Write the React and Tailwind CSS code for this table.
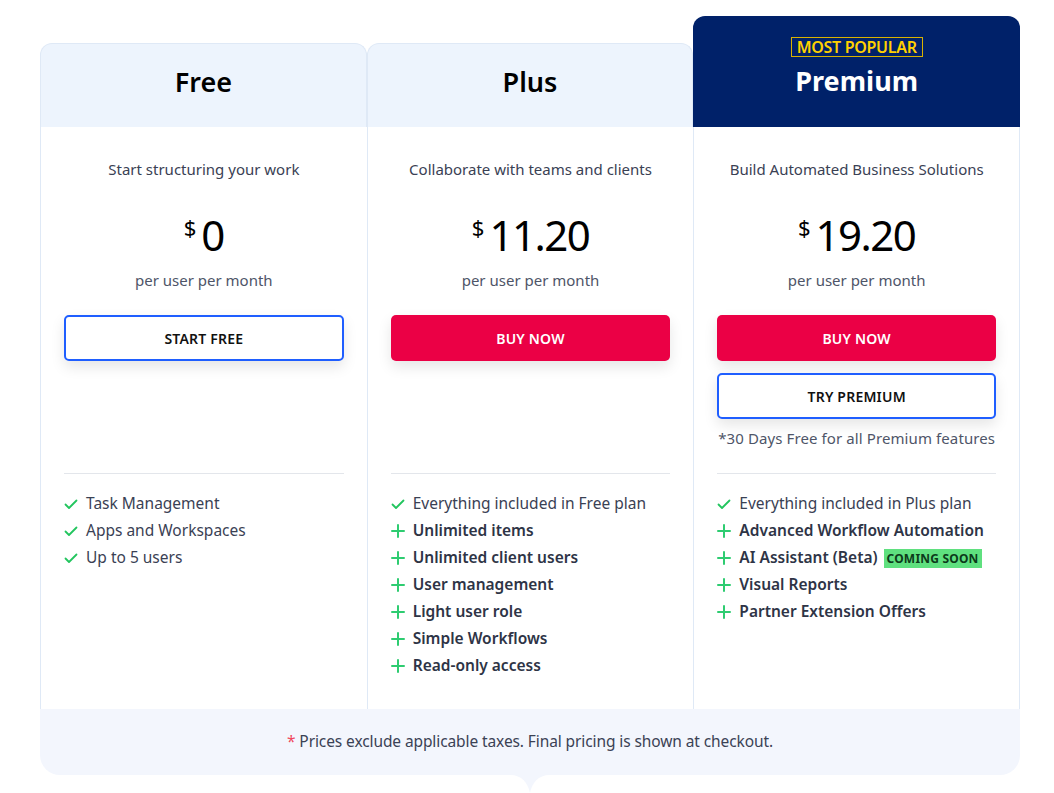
import React from "react";

const Check = () => (
  <svg width="14" height="14" viewBox="0 0 14 14" className="shrink-0">
    <path d="M1.5 7.5 L5 11 L12.5 3.5" fill="none" stroke="#22c55e" strokeWidth="1.8" strokeLinecap="round" strokeLinejoin="round" />
  </svg>
);

const Plus = () => (
  <svg width="14" height="14" viewBox="0 0 14 14" className="shrink-0">
    <path d="M7 1 V13 M1 7 H13" fill="none" stroke="#2ecc71" strokeWidth="2" strokeLinecap="round" />
  </svg>
);

const Feature = ({ icon, children, bold }) => (
  <li className="flex items-center gap-[8px] h-[27px]">
    <span className="w-[14px] flex justify-center">{icon === "check" ? <Check /> : <Plus />}</span>
    <span className={bold ? "font-semibold text-[#2e3446]" : "text-[#3a4154]"}>{children}</span>
  </li>
);

function Column({ title, premium, subtitle, price, buttons, note, features, last }) {
  return (
    <div className={"flex flex-col w-[327px] " + (premium ? "" : "mt-[27px]")}>
      {premium ? (
        <div className="h-[111px] bg-[#002169] rounded-t-[12px] flex flex-col items-center pt-[21px]">
          <span className="border border-[#d8b200] text-[#ffd000] text-[16px] font-semibold leading-[18px] px-[5px] tracking-[-0.3px]">MOST POPULAR</span>
          <span className="text-white text-[27px] font-bold leading-[36px] mt-[6px]">{title}</span>
        </div>
      ) : (
        <div className="h-[84px] bg-[#edf4fd] rounded-t-[12px] border border-b-0 border-[#dfe9f6] flex items-center justify-center pb-[8px]">
          <span className="text-black text-[27px] font-semibold leading-[36px]">{title}</span>
        </div>
      )}
      <div className={"flex-1 bg-white border-l border-[#dfe9f6] px-[23px] " + (last ? "border-r" : "")}>
        <div className="h-[346px] flex flex-col items-center pt-[31px]">
          <p className="text-[15px] leading-[22px] text-[#3a4154]">{subtitle}</p>
          <div className="flex items-start mt-[31px] h-[48px]">
            <span className="text-[22px] leading-[22px] text-black mt-[5px] mr-[5px]">$</span>
            <span className="text-[42px] leading-[48px] text-black tracking-[-1.5px]">{price}</span>
          </div>
          <p className="text-[15px] leading-[22px] text-[#4e5568] mt-[10px]">per user per month</p>
          {buttons.map((b, i) => (
            <div
              key={i}
              className={
                "w-full h-[46px] rounded-[5px] flex items-center justify-center text-[14px] font-semibold tracking-[0.2px] shadow-[0_6px_14px_rgba(0,0,0,0.10)] " +
                (i === 0 ? "mt-[24px] " : "mt-[12px] ") +
                (b.red ? "bg-[#eb0045] text-white" : "bg-white border-2 border-[#1f5eff] text-[#111]")
              }
            >
              {b.label}
            </div>
          ))}
          {note && <p className="text-[15px] leading-[22px] text-[#4e5568] mt-[8px] tracking-[0.1px]">{note}</p>}
        </div>
        <div className="border-t border-[#e3e6eb] pt-[16px] pb-[30px]">
          <ul className="text-[15.5px]">
            {features.map((f, i) => (
              <Feature key={i} icon={f[0]} bold={f[0] === "plus"}>
                {f[1]}
                {f[2] && (
                  <span className="ml-[6px] bg-[#5fe07f] text-[#0c3a1a] text-[12px] font-bold px-[3px] py-[1px] tracking-[0.2px]">{f[2]}</span>
                )}
              </Feature>
            ))}
          </ul>
        </div>
      </div>
    </div>
  );
}

export default function App() {
  return (
    <div className="w-[1054px] h-[793px] bg-white overflow-hidden" style={{ fontFamily: '"Noto Sans", "Open Sans", sans-serif' }}>
      <div className="ml-[40px] w-[980px] pt-[16px]">
        <div className="flex">
          <Column
            title="Free"
            subtitle="Start structuring your work"
            price="0"
            buttons={[{ label: "START FREE" }]}
            features={[
              ["check", "Task Management"],
              ["check", "Apps and Workspaces"],
              ["check", "Up to 5 users"],
            ]}
          />
          <Column
            title="Plus"
            subtitle="Collaborate with teams and clients"
            price="11.20"
            buttons={[{ label: "BUY NOW", red: true }]}
            features={[
              ["check", "Everything included in Free plan"],
              ["plus", "Unlimited items"],
              ["plus", "Unlimited client users"],
              ["plus", "User management"],
              ["plus", "Light user role"],
              ["plus", "Simple Workflows"],
              ["plus", "Read-only access"],
            ]}
          />
          <Column
            title="Premium"
            premium
            last
            subtitle="Build Automated Business Solutions"
            price="19.20"
            buttons={[{ label: "BUY NOW", red: true }, { label: "TRY PREMIUM" }]}
            note="*30 Days Free for all Premium features"
            features={[
              ["check", "Everything included in Plus plan"],
              ["plus", "Advanced Workflow Automation"],
              ["plus", "AI Assistant (Beta)", "COMING SOON"],
              ["plus", "Visual Reports"],
              ["plus", "Partner Extension Offers"],
            ]}
          />
        </div>
        <div className="relative h-[66px] bg-[#f3f6fd] rounded-b-[20px] flex items-center justify-center">
          <p className="text-[15.5px] text-[#3b4255] tracking-[-0.1px]">
            <span className="text-[#f0485e]">*</span> Prices exclude applicable taxes. Final pricing is shown at checkout.
          </p>
          <svg className="absolute left-[470px] top-[66px]" width="40" height="18" viewBox="0 0 40 18">
            <path d="M0 0 C12 0 18 8 20 18 C22 8 28 0 40 0 Z" fill="#f3f6fd" />
          </svg>
        </div>
      </div>
    </div>
  );
}
